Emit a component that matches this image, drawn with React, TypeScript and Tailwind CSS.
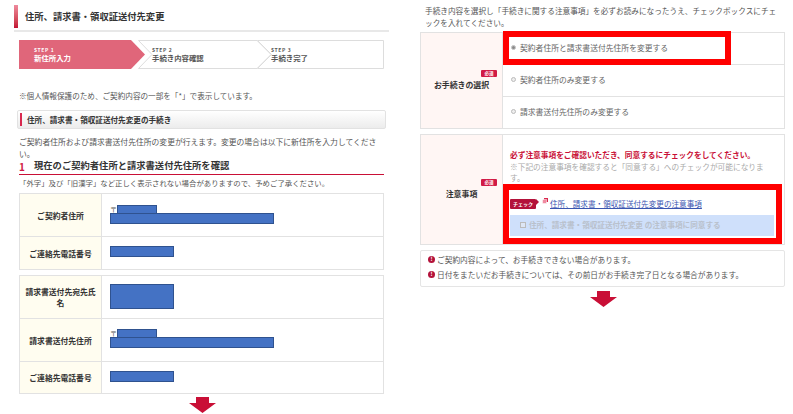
import React from 'react';

const FONT = "font-['Noto_Sans_CJK_JP','Liberation_Sans',sans-serif]";

const Redact = ({ className }: { className: string }) => (
  <span className={`absolute border border-[#2f528f] bg-[#4472c4] ${className}`} />
);

const Arrow = () => (
  <svg width="27" height="16" viewBox="0 0 27 16" className="block">
    <path d="M7 0H20V6H27L13.5 16L0 6H7Z" fill="#c90f36" />
  </svg>
);

const InfoRow = ({
  label,
  height,
  last,
  children,
}: {
  label: React.ReactNode;
  height: string;
  last?: boolean;
  children?: React.ReactNode;
}) => (
  <div className={`flex ${height} ${last ? '' : 'border-b border-[#e2e2e2]'}`}>
    <div className="flex w-[82px] shrink-0 items-center justify-center border-r border-[#e2e2e2] bg-[#fffdf0] px-1 text-center text-[7.8px] font-bold leading-[11px] text-[#333]">
      {label}
    </div>
    <div className="relative flex-1">{children}</div>
  </div>
);

const Required = ({ className }: { className: string }) => (
  <span className={`absolute flex h-[7px] w-4 items-center justify-center rounded-[1px] bg-[#d11a45] text-[4.5px] font-bold leading-none text-white ${className}`}>
    必須
  </span>
);

const Radio = ({ label, on }: { label: string; on?: boolean }) => (
  <div className="flex flex-1 items-center gap-[4px] border-b border-[#e2e2e2] pb-[2px] pl-[8px] text-[7.8px] text-[#666] last:border-b-0">
    <span className="flex h-[5px] w-[5px] items-center justify-center rounded-full border border-[#bbb] bg-[#eee]">
      {on && <span className="h-[3px] w-[3px] rounded-full bg-[#888]" />}
    </span>
    {label}
  </div>
);

const Notice = ({ text }: { text: string }) => (
  <div className="flex items-center gap-[2px] text-[7.7px] leading-[15px] text-[#555]">
    <span className="flex h-[7px] w-[7px] items-center justify-center rounded-full bg-[#b3123a] text-[5.5px] font-bold leading-none text-white">!</span>
    {text}
  </div>
);

export default function App() {
  return (
    <div className={`relative flex h-[414px] w-[793px] overflow-hidden bg-white ${FONT}`}>
      {/* left page */}
      <div className="w-[420px] shrink-0 pr-[36px]">
        <div className="ml-[14px] mr-[-5px] mt-[5px] flex h-[27px] items-start border-b-2 border-[#e8e8e8]">
          <div className="h-[23px] w-[4px] bg-gradient-to-b from-[#ee8a9d] to-[#c30d35]" />
          <div className="ml-[7px] mt-[5px] text-[9.3px] font-bold leading-[12px] text-[#333]">住所、請求書・領収証送付先変更</div>
        </div>

        <div className="relative ml-[19px] mt-[8px] flex h-[29px] w-[365px] text-[7.4px] leading-[9px]">
          <svg width="365" height="29" viewBox="0 0 365 29" className="absolute left-0 top-0">
            <path d="M119.5 .5H238L252 14.5L238 28.5H119.5L133 14.5Z" fill="#fff" stroke="#ddd" />
            <path d="M238.5 .5H364.5V28.5H238.5L252.5 14.5Z" fill="#fff" stroke="#ddd" />
            <path d="M0 0H112L126 14.5L112 29H0Z" fill="#e0667a" />
          </svg>
          <div className="relative w-[119px] pl-[15px] pt-[7px] font-bold text-white">
            <div className="text-[5px] leading-[6px] tracking-[.6px]">STEP 1</div>
            <div>新住所入力</div>
          </div>
          <div className="relative w-[119px] pl-[14px] pt-[7px] font-bold text-[#555]">
            <div className="text-[5px] leading-[6px] tracking-[.6px]">STEP 2</div>
            <div>手続き内容確認</div>
          </div>
          <div className="relative pl-[14px] pt-[7px] font-bold text-[#555]">
            <div className="text-[5px] leading-[6px] tracking-[.6px]">STEP 3</div>
            <div>手続き完了</div>
          </div>
        </div>

        <div className="ml-[19px] mt-[22px] text-[7.6px] leading-[10px] text-[#555]">※個人情報保護のため、ご契約内容の一部を「*」で表示しています。</div>

        <div className="ml-[17px] mr-[-2px] mt-[9px] flex h-[19px] items-center rounded-[2px] border border-[#e2e2e2] bg-gradient-to-b from-white to-[#ececec]">
          <div className="ml-[2px] h-[13px] w-[2px] bg-[#d8294f]" />
          <div className="ml-[5px] text-[7.6px] font-bold text-[#333]">住所、請求書・領収証送付先変更の手続き</div>
        </div>

        <div className="ml-[19px] mr-[5px] mt-[7px] text-[7.8px] leading-[12px] text-[#555]">
          ご契約者住所および請求書送付先住所の変更が行えます。変更の場合は以下に新住所を入力してください。
        </div>

        <div className="ml-[19px] mt-[-1px] flex h-[16px] items-center border-b border-[#c90f36] pb-[1px]">
          <span className="w-[15px] text-[10px] font-bold text-[#d11a45]">1</span>
          <span className="text-[9.3px] font-bold text-[#333]">現在のご契約者住所と請求書送付先住所を確認</span>
        </div>

        <div className="ml-[19px] mt-[3px] text-[7.4px] leading-[10px] text-[#555]">「外字」及び「旧漢字」など正しく表示されない場合がありますので、予めご了承ください。</div>

        <div className="ml-[19px] mt-[5px] w-[365px] border border-[#e2e2e2]">
          <InfoRow label="ご契約者住所" height="h-[43px]">
            <span className="absolute left-[8px] top-[11px] text-[7px] leading-[8px] text-[#555]">〒</span>
            <Redact className="left-[15px] top-[11px] h-[9px] w-[40px]" />
            <Redact className="left-[8px] top-[19px] h-[11px] w-[164px]" />
          </InfoRow>
          <InfoRow label="ご連絡先電話番号" height="h-[32px]" last>
            <Redact className="left-[8px] top-[9px] h-[11px] w-[64px]" />
          </InfoRow>
        </div>

        <div className="ml-[19px] mt-[5px] w-[365px] border border-[#e2e2e2]">
          <InfoRow label="請求書送付先宛先氏名" height="h-[43px]">
            <Redact className="left-[8px] top-[8px] h-[25px] w-[64px]" />
          </InfoRow>
          <InfoRow label="請求書送付先住所" height="h-[43px]">
            <span className="absolute left-[8px] top-[10px] text-[7px] leading-[8px] text-[#555]">〒</span>
            <Redact className="left-[15px] top-[10px] h-[9px] w-[40px]" />
            <Redact className="left-[8px] top-[18px] h-[11px] w-[164px]" />
          </InfoRow>
          <InfoRow label="ご連絡先電話番号" height="h-[31px]" last>
            <Redact className="left-[8px] top-[9px] h-[11px] w-[64px]" />
          </InfoRow>
        </div>

        <div className="ml-[189px] mt-[3px]">
          <Arrow />
        </div>
      </div>

      {/* right page */}
      <div className="w-[373px] shrink-0">
        <div className="ml-[5px] mr-[12px] mt-[5px] text-[7.65px] leading-[11.5px] text-[#555]">
          手続き内容を選択し「手続きに関する注意事項」を必ずお読みになったうえ、チェックボックスにチェックを入れてください。
        </div>

        <div className="mt-[4px] flex h-[97px] w-[365px] border border-[#e2e2e2]">
          <div className="relative flex w-[82px] shrink-0 items-center justify-center border-r border-[#e2e2e2] bg-[#fff6f4] text-[7.9px] font-bold text-[#333]">
            <Required className="right-[5px] top-[37px]" />
            <span className="mt-[9px]">お手続きの選択</span>
          </div>
          <div className="flex flex-1 flex-col">
            <Radio label="契約者住所と請求書送付先住所を変更する" on />
            <Radio label="契約者住所のみ変更する" />
            <Radio label="請求書送付先住所のみ変更する" />
          </div>
        </div>

        <div className="mt-[5px] flex h-[111px] w-[365px] border border-[#e2e2e2]">
          <div className="relative flex w-[82px] shrink-0 items-center justify-center border-r border-[#e2e2e2] bg-[#fff6f4] text-[7.9px] font-bold text-[#333]">
            <Required className="right-[5px] top-[44px]" />
            <span className="mt-[9px]">注意事項</span>
          </div>
          <div className="flex-1 pl-[7px] pr-[14px] pt-[14px] text-[7.7px] leading-[11.5px]">
            <div className="whitespace-nowrap font-bold text-[#c90f36]">必ず注意事項をご確認いただき、同意するにチェックをしてください。</div>
            <div className="text-[#aaa]">※下記の注意事項を確認すると「同意する」へのチェックが可能になります。</div>
            <div className="mt-[14px] flex h-[12px] items-center">
              <span className="flex h-[10px] w-[26px] shrink-0 items-center justify-center rounded-[1px] bg-[#b3123a] text-[5px] font-bold leading-none text-white">チェック</span>
              <svg width="14" height="10" viewBox="0 0 14 10" className="mb-[3px] shrink-0">
                <path d="M0 2L3 5L0 8Z" fill="#b3123a" />
                <rect x="8" y="1" width="4" height="4" fill="#d8294f" />
                <rect x="6.5" y="2.5" width="4" height="4" fill="#f08aa0" stroke="#fff" strokeWidth=".5" />
              </svg>
              <span className="whitespace-nowrap text-[7.6px] text-[#3a55b0] underline">住所、請求書・領収証送付先変更の注意事項</span>
            </div>
            <div className="mt-[5px] flex h-[21px] w-[264px] items-center whitespace-nowrap bg-[#cfe0fb] pl-[10px] text-[7.6px] font-bold text-[#b9c1cc]">
              <span className="mr-[3px] h-[6px] w-[6px] border border-[#bbb] bg-[#dde6f5]" />
              住所、請求書・領収証送付先変更 の注意事項に同意する
            </div>
          </div>
        </div>

        <div className="mt-[5px] h-[37px] w-[365px] rounded-[2px] border border-[#e5e5e5] px-[7px] pt-[1px]">
          <Notice text="ご契約内容によって、お手続きできない場合があります。" />
          <Notice text="日付をまたいだお手続きについては、その前日がお手続き完了日となる場合があります。" />
        </div>

        <div className="ml-[170px] mt-[4px]">
          <Arrow />
        </div>
      </div>

      {/* highlight boxes drawn over the capture */}
      <div className="absolute left-[503px] top-[31px] h-[34px] w-[228px] border-[6px] border-[#ff0000]" />
      <div className="absolute left-[503px] top-[184px] h-[60px] w-[279px] border-[6px] border-[#ff0000]" />
    </div>
  );
}
